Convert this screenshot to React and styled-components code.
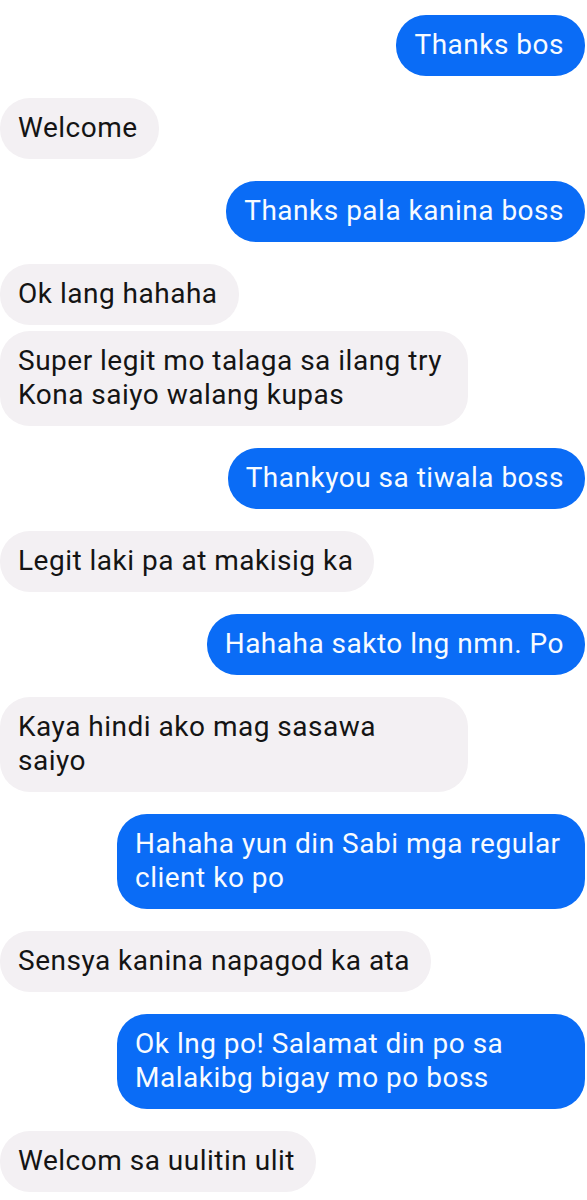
import React from "react";
import styled, { createGlobalStyle } from "styled-components";

const Global = createGlobalStyle`
  html, body { margin: 0; padding: 0; background: #ffffff; }
  body { font-family: Roboto, "Noto Sans", sans-serif; }
`;

const Thread = styled.div`
  display: flex;
  flex-direction: column;
  padding: 15px 2px 7px 0;
  background: #ffffff;
`;

const Row = styled.div`
  display: flex;
  justify-content: ${(p) => (p.$mine ? "flex-end" : "flex-start")};
  margin-top: ${(p) => (p.$first ? 0 : p.$grouped ? 6 : 22)}px;
`;

const Bubble = styled.div`
  max-width: 80%;
  box-sizing: border-box;
  padding: 13px 21px 14px 18px;
  border-radius: 30px;
  font-size: 28px;
  line-height: 34px;
  letter-spacing: 0.5px;
  color: ${(p) => (p.$mine ? "#f7fbff" : "#141414")};
  background: ${(p) => (p.$mine ? "#0a6cf6" : "#f3f0f3")};
`;

const messages = [
  { mine: true, text: "Thanks bos" },
  { mine: false, text: "Welcome" },
  { mine: true, text: "Thanks pala kanina boss" },
  { mine: false, text: "Ok lang hahaha" },
  { mine: false, text: "Super legit mo talaga sa ilang try Kona saiyo walang kupas" },
  { mine: true, text: "Thankyou sa tiwala boss" },
  { mine: false, text: "Legit laki pa at makisig ka" },
  { mine: true, text: "Hahaha sakto lng nmn. Po" },
  { mine: false, text: "Kaya hindi ako mag sasawa saiyo" },
  { mine: true, text: "Hahaha yun din Sabi mga regular client ko po" },
  { mine: false, text: "Sensya kanina napagod ka ata" },
  { mine: true, text: "Ok lng po! Salamat din po sa Malakibg bigay mo po boss" },
  { mine: false, text: "Welcom sa uulitin ulit" },
];

export default function App() {
  return (
    <>
      <Global />
      <Thread>
        {messages.map((m, i) => (
          <Row
            key={i}
            $mine={m.mine}
            $first={i === 0}
            $grouped={i > 0 && messages[i - 1].mine === m.mine}
          >
            <Bubble $mine={m.mine}>{m.text}</Bubble>
          </Row>
        ))}
      </Thread>
    </>
  );
}
